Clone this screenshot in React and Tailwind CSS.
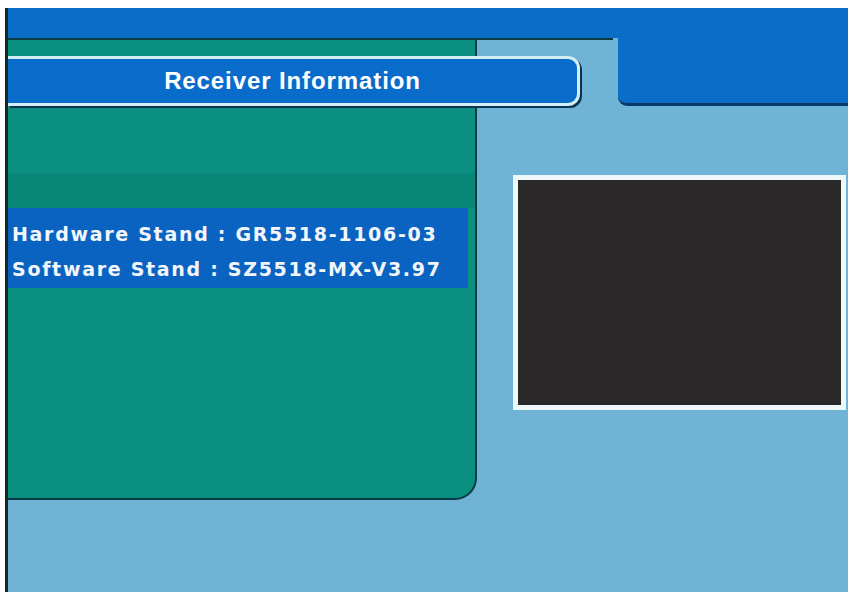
export default function App() {
  return (
    <div className="w-[851px] h-[595px] bg-white pt-[8px] pr-[3px] pb-[3px] pl-[5px] overflow-hidden">
      <div className="h-full border-l-[3px] border-[#14262a] bg-[#6fb3d6] flex flex-col">
        {/* top band */}
        <div className="h-[30px] bg-[#0a6ec9] shrink-0" />

        <div className="flex items-start">
          {/* green menu panel */}
          <div className="w-[469px] h-[462px] shrink-0 bg-[#0a8f80] border-t-2 border-r-2 border-b-2 border-[#0b3a40] rounded-br-[22px] flex flex-col">
            <div className="h-[16px]" />
            <div className="w-[572px] h-[50px] shrink-0 bg-[#0a6cca] border-y-[3px] border-r-[3px] border-[#d4eef8] rounded-r-[12px] shadow-[2px_2px_0_#0b3550] flex items-center justify-center">
              <span
                className="text-white font-bold text-[24px] tracking-[0.9px]"
                style={{ fontFamily: '"Liberation Sans", Arial, sans-serif' }}
              >
                Receiver Information
              </span>
            </div>
            <div className="h-[67px] shrink-0" />
            <div className="h-[35px] shrink-0 bg-[#088778]" />
            <div
              className="h-[80px] shrink-0 mr-[7px] bg-[#0b63c1] pt-[9px] pl-[4px] text-[#f2f6fa] font-bold text-[19px] tracking-[1.7px] leading-[35px]"
              style={{ fontFamily: '"DejaVu Sans", Verdana, sans-serif' }}
            >
              <div className="whitespace-nowrap">Hardware Stand : GR5518-1106-03</div>
              <div className="whitespace-nowrap">Software Stand : SZ5518-MX-V3.97</div>
            </div>
          </div>

          {/* right area */}
          <div className="flex-1 flex flex-col">
            <div className="flex h-[68px]">
              <div className="w-[136px] border-t-2 border-[#0b3a40]" />
              <div className="flex-1 ml-[5px] bg-[#0a6ec9] border-b-[3px] border-[#0a3a6c] rounded-bl-[9px]" />
            </div>
            <div className="ml-[36px] mt-[69px] w-[333px] h-[235px] border-[5px] border-[#eef8fb] bg-[#2a2828]" />
          </div>
        </div>
      </div>
    </div>
  )
}
